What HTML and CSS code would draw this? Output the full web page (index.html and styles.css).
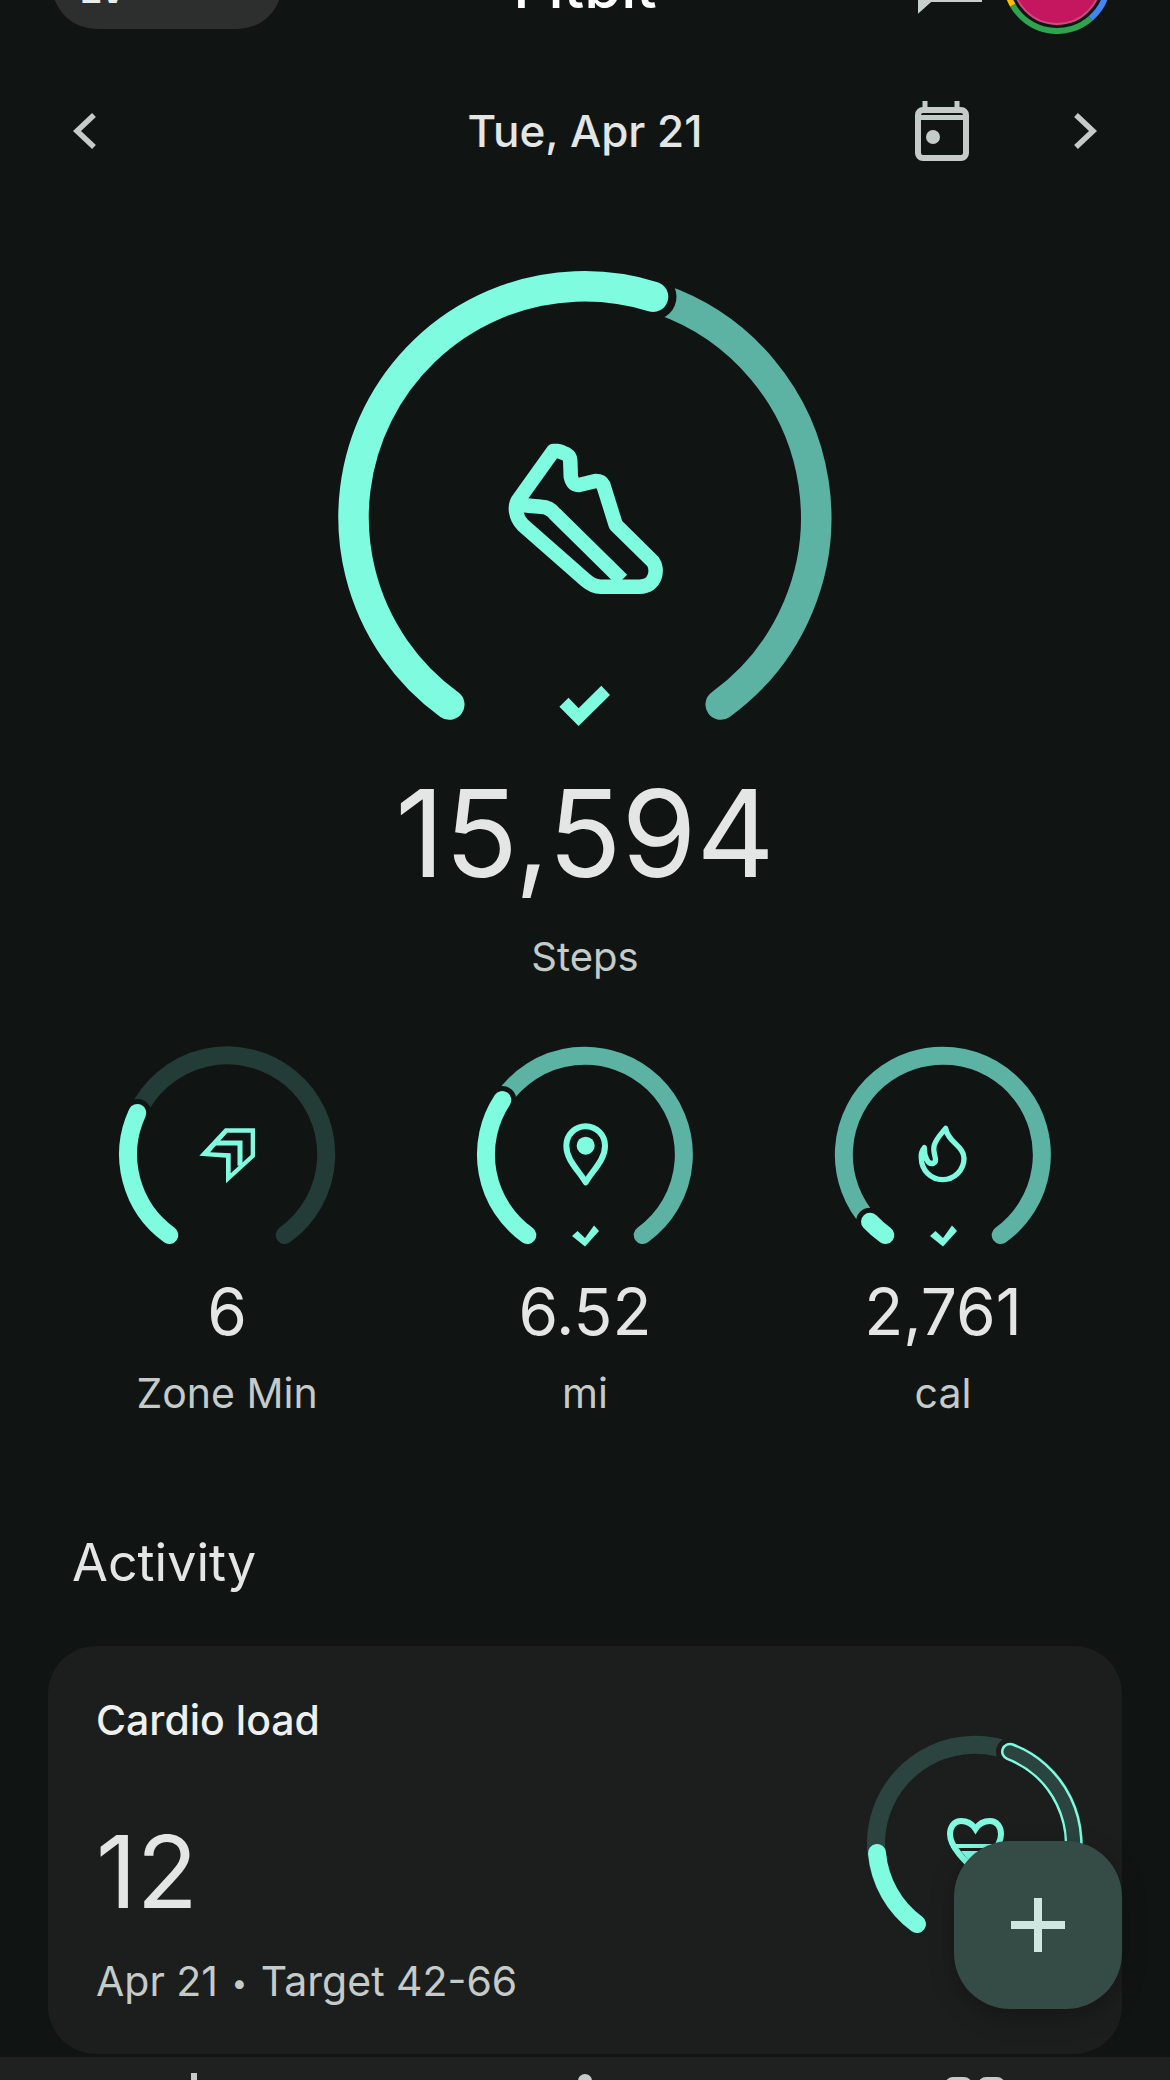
FILE: index.html
```html
<!DOCTYPE html>
<html lang="en">

<head>
    <meta charset="UTF-8">
    <meta name="viewport" content="width=device-width, initial-scale=1.0">
    <title>Fitbit today</title>
    <link rel="stylesheet" href="styles.css">
</head>

<body>
    <div class="page">
        <header class="topbar">
            <div class="level-pill"><span class="level-text">LV</span></div>
            <div class="app-title">Fitbit</div>
            <div class="topbar-right">
                <svg class="chat-icon" width="64" height="94" viewBox="0 0 64 94">
                    <path d="M3 0V67L12 59H64" fill="none" stroke="#c8cfcc" stroke-width="6" />
                </svg>
                <svg class="avatar" width="120" height="94" viewBox="0 0 120 94">
                    <circle cx="59" cy="40" r="44" fill="#c4175f" stroke="#d2487f" stroke-width="2" />
                    <path d="M14.7 65.2A51 51 0 0 0 92.6 78.4" fill="none" stroke="#2ea44f" stroke-width="6" />
                    <path d="M92.6 78.4A51 51 0 0 0 110 40" fill="none" stroke="#4285f4" stroke-width="6" />
                    <path d="M14.7 65.2A51 51 0 0 1 8 40" fill="none" stroke="#fbbc04" stroke-width="6" />
                </svg>
            </div>
        </header>

        <div class="date-row">
            <svg class="chevron" width="24" height="36" viewBox="0 0 24 36">
                <path d="M21 2L4 18L21 34" fill="none" stroke="#c4cbc8" stroke-width="5.5" />
            </svg>
            <div class="date-text">Tue, Apr 21</div>
            <div class="date-right">
                <svg width="54" height="60" viewBox="0 0 54 60">
                    <path d="M10 0V8M42 0V8" stroke="#c4cbc8" stroke-width="5" />
                    <rect x="3" y="9" width="48" height="48" rx="5" fill="none" stroke="#c4cbc8" stroke-width="6" />
                    <rect x="3" y="14" width="48" height="5" fill="#c4cbc8" />
                    <circle cx="18" cy="36" r="7" fill="#c4cbc8" />
                </svg>
                <svg class="chevron" width="24" height="36" viewBox="0 0 24 36">
                    <path d="M3 2L20 18L3 34" fill="none" stroke="#c4cbc8" stroke-width="5.5" />
                </svg>
            </div>
        </div>

        <!-- steps ring, centre at 265,267.7 -->
        <svg class="main-ring" width="530" height="500" viewBox="0 0 530 500">
            <path d="M340 49A231 231 0 0 1 400.7 454.6" class="track-mid big-stroke" />
            <circle cx="333" cy="46.7" r="23.5" fill="#101514" />
            <path d="M129.3 454.6A231 231 0 0 1 333 46.7" class="bright big-stroke" />
            <path d="M238.3 201C244 203 250 205 250.2 210L250.8 226.7C252 232 254 235 259 235L275.5 231C279 231 282 232 283.3 235L295.8 275L333 311.7C338 318 337 336.700 319.500 336.700H280.600C274 336.700 270 334 265.400 330L202.800 275C196 268 193 256 199.500 248.300L233.300 201Z" fill="none" stroke="#7ffbe0" stroke-width="14.5" stroke-linejoin="round" />
            <path d="M199 254C205 256 214 256 221 256.700C228 257 232 260 235 264L302 330" fill="none" stroke="#7ffbe0" stroke-width="14.5" />
            <polygon points="239.400,456.700 248.500,447.700 258.600,458.300 281.300,435.700 290,445 258.600,476" fill="#7ffbe0" />
        </svg>

        <div class="big-number">15,594</div>
        <div class="big-label">Steps</div>

        <section class="stats">
            <div class="stat">
                <svg width="240" height="220" viewBox="0 0 240 220">
                    <path d="M30.300 83A99 99 0 1 1 177.700 205" class="track-dim small-stroke" />
                    <circle cx="30.300" cy="83" r="14" fill="#101514" />
                    <path d="M62.300 205A99 99 0 0 1 30.300 83" class="bright small-stroke" />
                    <svg x="83" y="85" width="75" height="75" viewBox="0 0 225 225">
                        <polygon points="28,122 105,40 195,40 195,125 108,205 108,128" fill="#7ffbe0" />
                        <polygon points="60,112 112,53 182,53 182,120 122,175 122,115" fill="#101514" />
                        <path d="M72 84H150V152" fill="none" stroke="#7ffbe0" stroke-width="15" />
                    </svg>
                </svg>
                <div class="stat-value">6</div>
                <div class="stat-label">Zone Min</div>
            </div>
            <div class="stat">
                <svg width="240" height="220" viewBox="0 0 240 220">
                    <path d="M37.300 70A99 99 0 1 1 177.700 205" class="track-mid small-stroke" />
                    <circle cx="37.300" cy="70" r="14" fill="#101514" />
                    <path d="M62.300 205A99 99 0 0 1 37.300 70" class="bright small-stroke" />
                    <svg x="85" y="85" width="75" height="75" viewBox="0 0 225 225">
                        <path d="M107 202C85 165 49 135 49 92A58 58 0 0 1 165 92C165 135 129 165 107 202Z" fill="none" stroke="#7ffbe0" stroke-width="18" stroke-linejoin="round" />
                        <circle cx="107" cy="92" r="27" fill="#7ffbe0" />
                    </svg>
                    <polygon class="mini-check" points="107,206 112.500,201 120,208 129,195.500 134,201 120,216.500" />
                </svg>
                <div class="stat-value">6.52</div>
                <div class="stat-label">mi</div>
            </div>
            <div class="stat">
                <svg width="240" height="220" viewBox="0 0 240 220">
                    <path d="M47 191.700A99 99 0 1 1 177.700 205" class="track-mid small-stroke" />
                    <circle cx="47" cy="191.700" r="14" fill="#101514" />
                    <path d="M62.300 205A99 99 0 0 1 47 191.700" class="bright small-stroke" />
                    <svg x="82" y="85" width="75" height="75" viewBox="0 0 225 225">
                        <path d="M122 40C128 82 177 92 177 130A64 64 0 0 1 49 130C47 118 50 108 58 98C58 125 68 150 85 145C102 138 80 115 88 90C94 70 110 55 122 40Z" fill="none" stroke="#7ffbe0" stroke-width="16" stroke-linejoin="round" />
                    </svg>
                    <polygon class="mini-check" points="107,206 112.500,201 120,208 129,195.500 134,201 120,216.500" />
                </svg>
                <div class="stat-value">2,761</div>
                <div class="stat-label">cal</div>
            </div>
        </section>

        <h2 class="section-title">Activity</h2>

        <section class="card">
            <div class="card-text">
                <div class="card-title">Cardio load</div>
                <div class="card-value">12</div>
                <div class="card-sub">Apr 21 <span class="dot">•</span> Target 42-66</div>
            </div>
            <svg class="card-ring" width="240" height="220" viewBox="0 0 240 220">
                <path d="M62 205A99 99 0 1 1 178 205" class="track-card small-stroke" />
                <circle cx="155" cy="32.700" r="14" fill="#1c1e1d" />
                <path d="M155 32.700A99 99 0 0 1 214 155" fill="none" stroke="#7ffbe0" stroke-width="18" stroke-linecap="round" />
                <path d="M155 32.700A99 99 0 0 1 214 155" fill="none" stroke="#2b443f" stroke-width="13" stroke-linecap="round" />
                <path d="M62 205A99 99 0 0 1 22 134" class="bright small-stroke" />
                <path d="M120.500 110C116 103 110 102 106 102C99 102 95 108 95 115C95 128 110 142 120.500 152C131 142 146 128 146 115C146 108 142 102 135 102C131 102 125 103 120.500 110Z" fill="none" stroke="#7ffbe0" stroke-width="6" />
                <path d="M96 127H145" stroke="#7ffbe0" stroke-width="4" />
                <path d="M106 132H135L120.500 150Z" fill="#7ffbe0" />
            </svg>
        </section>

        <nav class="bottom-nav">
            <div class="nav-item">
                <svg width="60" height="20" viewBox="0 0 60 20"><rect x="26" y="0" width="6" height="20" fill="#c4cbc8" /></svg>
            </div>
            <div class="nav-item">
                <svg width="60" height="20" viewBox="0 0 60 20"><circle cx="30" cy="8" r="7" fill="#c4cbc8" /></svg>
            </div>
            <div class="nav-item">
                <svg width="60" height="20" viewBox="0 0 60 20">
                    <rect x="0" y="4" width="27" height="27" rx="8" fill="#c4cbc8" />
                    <rect x="33" y="4" width="27" height="27" rx="8" fill="#c4cbc8" />
                </svg>
            </div>
        </nav>

        <button class="fab" type="button">
            <svg width="54" height="54" viewBox="0 0 54 54">
                <path d="M27 0V54M0 27H54" stroke="#cfe5df" stroke-width="8" />
            </svg>
        </button>
    </div>
</body>

</html>
```

FILE: styles.css
```css
* {
    box-sizing: border-box;
    margin: 0;
    padding: 0;
}

body {
    background: #101514;
    font-family: Inter, Roboto, sans-serif;
    color: #e3e6e4;
}

.page {
    position: relative;
    width: 1170px;
    height: 2080px;
    overflow: hidden;
    display: flex;
    flex-direction: column;
}

svg {
    display: block;
}

/* ring strokes */
.big-stroke,
.small-stroke {
    fill: none;
    stroke-linecap: round;
}

.big-stroke {
    stroke-width: 30.5;
}

.small-stroke {
    stroke-width: 18;
}

.bright {
    stroke: #7ffbe0;
}

.track-mid {
    stroke: #5cb3a3;
}

.track-dim {
    stroke: #233c37;
}

.track-card {
    stroke: #2b443f;
}

.mini-check {
    fill: #7ffbe0;
}

/* top bar, cut off by the top of the screen */
.topbar {
    margin-top: -60px;
    height: 94px;
    padding: 0 52px;
    display: grid;
    grid-template-columns: 1fr auto 1fr;
    align-items: start;
}

.level-pill {
    width: 230px;
    height: 89px;
    border-radius: 46px;
    background: #2c2f2e;
    padding: 0 0 0 28px;
    display: flex;
    align-items: flex-end;
}

.level-text {
    font-size: 38px;
    font-weight: 700;
    line-height: 46px;
    margin-bottom: 17px;
    color: #e8ecea;
}

.app-title {
    margin-top: 14px;
    font-size: 60px;
    font-weight: 500;
    line-height: 64px;
    color: #fff;
}

.topbar-right {
    display: flex;
    justify-content: flex-end;
    gap: 16px;
}

/* date */
.date-row {
    margin-top: 67px;
    height: 60px;
    padding: 0 73px;
    display: grid;
    grid-template-columns: 1fr auto 1fr;
    align-items: center;
}

.date-text {
    font-size: 44px;
    font-weight: 500;
    line-height: 60px;
    color: #e3e6e4;
}

.date-right {
    display: flex;
    align-items: center;
    justify-content: flex-end;
    gap: 104px;
}

.main-ring {
    margin: 89px auto 0;
}

.big-number {
    margin-top: 18px;
    text-align: center;
    font-size: 121px;
    line-height: 130px;
}

.big-label {
    margin-top: 35px;
    text-align: center;
    font-size: 40px;
    line-height: 48px;
    color: #c4cbc8;
}

.stats {
    margin-top: 49px;
    padding: 0 48px;
    display: grid;
    grid-template-columns: repeat(3, 358px);
}

.stat {
    display: flex;
    flex-direction: column;
    align-items: center;
}

.stat-value {
    margin-top: 27px;
    font-size: 64px;
    line-height: 70px;
}

.stat-label {
    margin-top: 21px;
    font-size: 41px;
    line-height: 50px;
    color: #c4cbc8;
}

.section-title {
    margin-top: 115px;
    padding-left: 72px;
    font-size: 52px;
    font-weight: 400;
    line-height: 60px;
}

/* activity card */
.card {
    margin: 53px 48px 0;
    height: 408px;
    padding: 50px 27px 0 48px;
    border-radius: 48px;
    background: #1c1e1d;
    display: flex;
    justify-content: space-between;
    flex-shrink: 0;
}

.card-title {
    font-size: 41px;
    font-weight: 500;
    line-height: 48px;
    color: #eef0ef;
}

.card-value {
    margin-top: 76px;
    font-size: 100px;
    line-height: 104px;
}

.card-sub {
    margin-top: 32px;
    font-size: 41px;
    line-height: 50px;
    color: #c4cbc8;
}

.dot {
    margin: 0 2px;
    font-size: 28px;
    vertical-align: 3px;
}

.card-ring {
    margin-top: 23px;
}

/* bottom nav, mostly off screen */
.bottom-nav {
    margin-top: 3px;
    height: 23px;
    padding-top: 16px;
    background: #1f2120;
    display: grid;
    grid-template-columns: repeat(3, 1fr);
    flex-shrink: 0;
}

.nav-item {
    display: flex;
    justify-content: center;
}

.fab {
    position: absolute;
    right: 48px;
    bottom: 71px;
    width: 168px;
    height: 168px;
    border: none;
    border-radius: 56px;
    background: #354b45;
    box-shadow: 0 8px 24px rgba(0, 0, 0, 0.25);
    display: flex;
    align-items: center;
    justify-content: center;
}
```
